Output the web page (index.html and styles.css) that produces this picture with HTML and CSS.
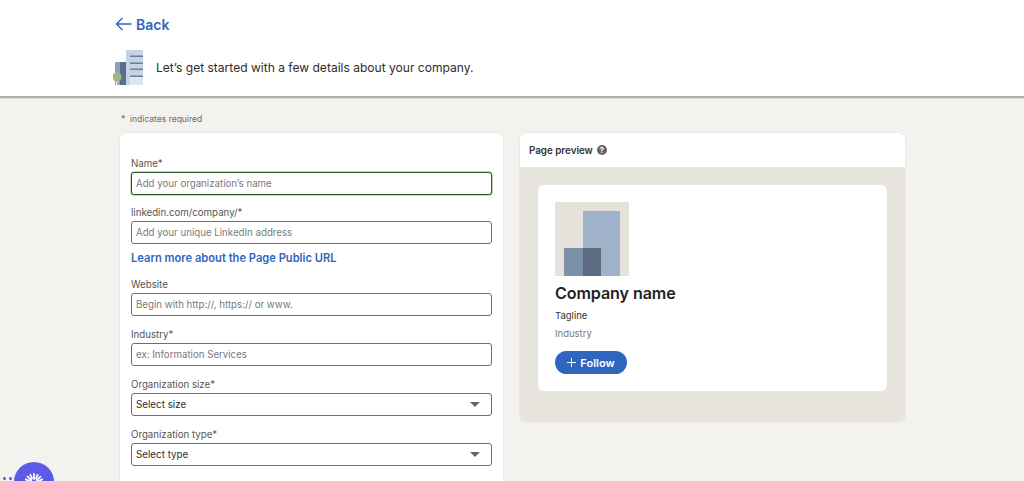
FILE: index.html
```html
<!DOCTYPE html>
<html lang="en">
<head>
<meta charset="utf-8">
<title>Create a company page</title>
<link rel="stylesheet" href="styles.css">
</head>
<body>
<header class="top">
  <a class="back" href="#">
    <svg class="back-icon" width="17" height="14" viewBox="0 0 17 14" fill="none" stroke="currentColor" stroke-width="1.4"><path d="M16.5 7H1.5M7.5 1L1.5 7l6 6"/></svg>
    <span>Back</span>
  </a>
  <div class="intro">
    <svg class="intro-icon" width="31" height="35" viewBox="0 0 31 35">
      <rect x="13" y="0" width="17" height="35" fill="#c5d3e6"/>
      <rect x="17" y="26" width="13" height="9" fill="#dde6f0"/>
      <rect x="2" y="12" width="11" height="23" fill="#8ca0b8"/>
      <rect x="7" y="12" width="6" height="23" fill="#5a6e88"/>
      <g fill="#6f7d92"><rect x="17" y="5.5" width="13" height="1.5"/><rect x="17" y="12.5" width="13" height="1.5"/><rect x="17" y="18.5" width="13" height="1.5"/><rect x="17" y="25.5" width="13" height="1.5"/></g>
      <rect x="3.2" y="28" width="1.2" height="7" fill="#fff"/>
      <circle cx="4" cy="27" r="4.6" fill="#a3b67f"/>
    </svg>
    <p class="intro-text">Let’s get started with a few details about your company.</p>
  </div>
</header>
<main class="main">
  <p class="req">*&nbsp; indicates required</p>
  <div class="columns">
    <form class="card form-card">
      <div class="field">
        <label class="label">Name*</label>
        <div class="input focus placeholder">Add your organization’s name</div>
      </div>
      <div class="field">
        <label class="label">linkedin.com/company/*</label>
        <div class="input placeholder">Add your unique LinkedIn address</div>
        <a class="learn" href="#">Learn more about the Page Public URL</a>
      </div>
      <div class="field">
        <label class="label">Website</label>
        <div class="input placeholder">Begin with http://, https:// or www.</div>
      </div>
      <div class="field">
        <label class="label">Industry*</label>
        <div class="input placeholder">ex: Information Services</div>
      </div>
      <div class="field">
        <label class="label">Organization size*</label>
        <div class="input select"><span>Select size</span><i class="caret"></i></div>
      </div>
      <div class="field">
        <label class="label">Organization type*</label>
        <div class="input select"><span>Select type</span><i class="caret"></i></div>
      </div>
    </form>
    <section class="card preview">
      <div class="preview-head">
        <span class="preview-title">Page preview</span>
        <span class="help">?</span>
      </div>
      <div class="preview-body">
        <div class="company">
          <svg class="logo" width="74" height="74" viewBox="0 0 74 74">
            <rect width="74" height="74" fill="#e6e2db"/>
            <rect x="28" y="9" width="37" height="65" fill="#a0b2c9"/>
            <rect x="9" y="46" width="37" height="28" fill="#7b90a9"/>
            <rect x="28" y="46" width="18" height="28" fill="#5c6b7f"/>
          </svg>
          <h2 class="company-name">Company name</h2>
          <p class="tagline">Tagline</p>
          <p class="industry">Industry</p>
          <button class="follow" type="button"><span class="plus"></span>Follow</button>
        </div>
      </div>
    </section>
  </div>
</main>
<div class="fab-clip">
  <div class="fab-dots"><i></i><i></i></div>
  <div class="fab">
    <svg width="20" height="20" viewBox="0 0 20 20" stroke="#fff" stroke-width="1.8" stroke-linecap="round"><path d="M10 1v5M10 14v5M1 10h5M14 10h5M3.6 3.6l3.6 3.6M12.8 12.8l3.6 3.6M16.4 3.6l-3.6 3.6M7.2 12.8l-3.6 3.6M6.4 1.8l1.6 3.6M13.6 1.8L12 5.4M1.8 6.4l3.6 1.6M18.2 6.4l-3.6 1.6"/></svg>
  </div>
</div>
</body>
</html>
```
FILE: styles.css
```css
* { box-sizing: border-box; }
html, body { margin: 0; height: 481px; overflow: hidden; }
body { background: #f3f2ef; font-family: Inter, "Liberation Sans", sans-serif; color: #2b2b2b; }

.top { height: 98px; background: #fff; border-bottom: 2px solid #b0aeab; box-shadow: 0 1px 1px rgba(0,0,0,.08); padding: 13px 0 0 115px; }
.back { display: flex; align-items: center; gap: 4px; color: #2f66bd; font-size: 14px; font-weight: 600; text-decoration: none; height: 22px; }
.back-icon { display: block; }
.intro { display: flex; align-items: center; gap: 12px; margin-top: 15px; margin-left: -2px; }
.intro-text { margin: 0; font-size: 12.05px; color: #2e2e2e; }

.main { width: 785px; margin-left: 120px; }
.req { margin: 16px 0 0 1px; font-size: 8.5px; line-height: 11px; color: #6b6b6b; }
.columns { display: flex; align-items: flex-start; gap: 17px; margin-top: 8px; }
.card { background: #fff; border-radius: 6px; }

.form-card { width: 383px; height: 348px; padding: 23.7px 11px 0; box-shadow: 0 0 0 1px #ebe9e5; border-radius: 6px 6px 0 0; }
.field { margin-bottom: 11.8px; }
.label { display: block; font-size: 9.7px; line-height: 14px; color: #555; margin-bottom: 1px; height: 14px; }
.input { height: 23px; border: 1px solid #6e6e6e; border-radius: 3px; padding: 0 4px; font-size: 9.7px; line-height: 21px; background: #fff; }
.placeholder { color: #7a7a7a; }
.focus { border: 1.5px solid #2d5a2d; box-shadow: 0 0 0 .5px #8fb07f; }
.learn { display: block; margin-top: 6px; margin-bottom: 1.7px; font-size: 11.15px; line-height: 16px; font-weight: 600; color: #2f66bd; text-decoration: none; height: 16px; }
.select { display: flex; align-items: center; justify-content: space-between; color: #2e2e2e; padding-right: 11px; font-size: 9.8px; }
.caret { width: 0; height: 0; border-left: 5px solid transparent; border-right: 5px solid transparent; border-top: 5px solid #666; }

.preview { flex: 1; overflow: hidden; box-shadow: 0 0 0 1px #ebe9e5; }
.preview-head { height: 34px; display: flex; align-items: center; gap: 4px; padding-left: 9px; }
.preview-title { font-size: 9.8px; font-weight: 600; color: #333; }
.help { width: 10px; height: 10px; border-radius: 50%; background: #666; color: #fff; font-size: 8px; font-weight: 700; line-height: 10px; text-align: center; }
.preview-body { background: #e8e5de; padding: 18px 18px 31px; }
.company { background: #fff; border-radius: 6px; height: 206px; padding: 17px; }
.logo { display: block; }
.company-name { margin: 6px 0 0; font-size: 16.1px; line-height: 22px; font-weight: 600; color: #222; letter-spacing: -.1px; }
.tagline { margin: 5px 0 0; font-size: 9.5px; line-height: 14px; color: #333; }
.industry { margin: 4px 0 0; font-size: 9.5px; line-height: 14px; color: #777; }
.follow { display: flex; align-items: center; justify-content: center; gap: 4px; width: 72px; height: 23px; margin-top: 10px; border: 0; border-radius: 12px; background: #2e66bd; color: #fff; font: 600 11px Inter, "Liberation Sans", sans-serif; padding: 0; }
.plus { width: 9px; height: 9px; background: linear-gradient(#fff, #fff) center / 100% 1.2px no-repeat, linear-gradient(#fff, #fff) center / 1.2px 100% no-repeat; }

.fab-clip { position: fixed; left: 0; bottom: 0; width: 60px; height: 19px; overflow: hidden; }
.fab { position: absolute; left: 14px; top: 0; width: 40px; height: 40px; border-radius: 50%; background: #5b5be6; display: flex; justify-content: center; padding-top: 11px; }
.fab-dots { position: absolute; left: 3px; top: 15px; display: flex; gap: 3px; }
.fab-dots i { width: 3px; height: 3px; border-radius: 50%; background: #5b5be6; }
```
